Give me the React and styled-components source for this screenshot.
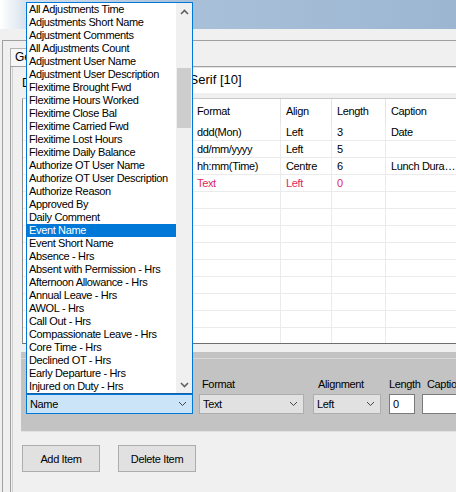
import React from 'react'
import styled, { createGlobalStyle } from 'styled-components'

const GlobalStyle = createGlobalStyle`
  html, body {
    margin: 0;
    padding: 0;
    background: #f0f0f0;
  }
  body {
    font-family: "Liberation Sans", Arial, sans-serif;
    font-size: 11px;
    letter-spacing: -0.35px;
    color: #000;
  }
  * {
    box-sizing: border-box;
  }
`

const Window = styled.div`
  position: relative;
  width: 456px;
  height: 492px;
  overflow: hidden;
  background: #f0f0f0;
  display: flex;
  flex-direction: column;
`

const TitleBar = styled.div`
  height: 29px;
  flex: none;
  background: linear-gradient(to right, #ffffff 0%, #d4e0ec 6%, #a9c0d9 40%, #9cb6d2 100%);
`

const MenuStrip = styled.div`
  height: 11px;
  flex: none;
  background: #f0f0f0;
`

const Frame = styled.div`
  flex: 1;
  margin-left: 2px;
  border-left: 1px solid #a0a0a0;
  border-top: 1px solid #a0a0a0;
  padding-left: 7px;
  display: flex;
  flex-direction: column;
  min-height: 0;
`

const TabStrip = styled.div`
  height: 25px;
  flex: none;
  display: flex;
  align-items: flex-end;
`

const Tab = styled.div`
  height: 18px;
  padding: 0 6px 0 4px;
  border: 1px solid #b4b4b4;
  border-bottom: none;
  background: #f7f7f7;
  font-size: 12px;
  letter-spacing: 0;
  line-height: 16px;
  white-space: nowrap;
`

const TabPage = styled.div`
  flex: 1;
  border-left: 1px solid #a0a0a0;
  border-top: 1px solid #a0a0a0;
  box-shadow: inset 1px 0 0 #f0f0f0, inset 2px 0 0 #d0d0d0;
  padding-left: 11px;
  display: flex;
  flex-direction: column;
  min-height: 0;
`

const FontRow = styled.div`
  height: 26px;
  flex: none;
  display: flex;
  align-items: stretch;
`

const FontLabel = styled.div`
  width: 74px;
  flex: none;
  padding-top: 9px;
  font-size: 12px;
  letter-spacing: 0;
  white-space: nowrap;
  overflow: hidden;
`

const FontBox = styled.div`
  flex: 1;
  background: #fff;
  border-top: 1px solid #e4e4e4;
  padding-left: 4px;
  font-size: 13px;
  letter-spacing: 0;
  line-height: 24px;
  white-space: nowrap;
`

const Grid = styled.div`
  margin-top: 5px;
  flex: none;
  border-top: 1px solid #c8c8c8;
  border-left: 1px solid #8c8c8c;
  border-bottom: 1px solid #6e6e6e;
  background: #fff;
  overflow: hidden;
`

const GridBody = styled.div`
  height: 219px;
  overflow: hidden;
`

const columns = '20px 149px 89px 51px 54px 72px'

const HeaderRow = styled.div`
  display: grid;
  grid-template-columns: ${columns};
  height: 25px;
`

const HeaderCell = styled.div`
  border-right: 1px solid #e3e3e3;
  padding-left: 5px;
  line-height: 25px;
  white-space: nowrap;
  overflow: hidden;
`

const Row = styled.div`
  display: grid;
  grid-template-columns: ${columns};
  height: 17px;
  color: ${p => (p.$editing ? '#e0285e' : '#000')};
`

const Cell = styled.div`
  border-right: 1px solid #ebebeb;
  border-bottom: 1px solid #ebebeb;
  padding: 0 1px 0 5px;
  line-height: 16px;
  white-space: nowrap;
  overflow: hidden;
  text-overflow: ellipsis;
`

const GridGap = styled.div`
  height: 8px;
  flex: none;
`

const EditPanel = styled.div`
  margin-left: -1px;
  height: 80px;
  flex: none;
  background: #c3c3c3;
  border-bottom: 1px solid #e2e2e2;
  padding: 25px 0 0 5px;
  display: flex;
  align-items: flex-start;
  position: relative;

  &::before {
    content: '';
    position: absolute;
    left: 0;
    right: 0;
    top: 6px;
    height: 1px;
    background: #d8d8d8;
  }
`

const Field = styled.div`
  display: flex;
  flex-direction: column;
  width: ${p => p.$width}px;
  margin-left: ${p => p.$gap || 0}px;
  flex: none;
`

const FieldLabel = styled.div`
  height: 14px;
  line-height: 14px;
  margin-bottom: 3px;
  padding-left: ${p => p.$indent || 0}px;
  white-space: nowrap;
`

const ComboWrap = styled.div`
  position: relative;
`

const Combo = styled.div`
  height: 20px;
  display: flex;
  align-items: center;
  justify-content: space-between;
  padding: 0 5px 0 3px;
  border: 1px solid ${p => (p.$open ? '#0078d7' : '#adadad')};
  background: ${p => (p.$open ? '#cce4f7' : '#e1e1e1')};
`

const TextInput = styled.div`
  height: 20px;
  border: 1px solid #7a7a7a;
  background: #fff;
  padding-left: 3px;
  line-height: 18px;
`

const DropList = styled.div`
  position: absolute;
  left: 0;
  right: 0;
  bottom: 100%;
  height: 392px;
  border: 1px solid #0078d7;
  border-bottom-color: #1b5fa6;
  background: #fff;
  display: flex;
  z-index: 10;
`

const Items = styled.div`
  flex: 1;
  display: flex;
  flex-direction: column;
`

const Item = styled.div`
  height: 13px;
  line-height: 13px;
  padding-left: 2px;
  white-space: nowrap;
  overflow: hidden;
  background: ${p => (p.$selected ? '#0078d7' : 'transparent')};
  color: ${p => (p.$selected ? '#fff' : '#000')};
`

const ScrollBar = styled.div`
  width: 16px;
  flex: none;
  background: #f0f0f0;
  display: flex;
  flex-direction: column;
`

const ScrollButton = styled.div`
  height: 17px;
  flex: none;
  display: flex;
  align-items: center;
  justify-content: center;
`

const Track = styled.div`
  flex: 1;
  padding: 0 1px;
`

const Thumb = styled.div`
  margin-top: ${p => p.$top}px;
  height: ${p => p.$size}px;
  background: #cdcdcd;
`

const ButtonRow = styled.div`
  display: flex;
  gap: 18px;
  margin-top: 13px;
`

const Button = styled.div`
  width: 78px;
  height: 27px;
  border: 1px solid #adadad;
  background: #e1e1e1;
  display: flex;
  align-items: center;
  justify-content: center;
`

const Chevron = ({ up, color = '#555', weight = 1 }) => (
  <svg width="9" height="6" viewBox="0 0 9 6">
    <path
      d={up ? 'M1 5 L4.5 1.5 L8 5' : 'M1 1 L4.5 4.5 L8 1'}
      fill="none"
      stroke={color}
      strokeWidth={weight}
    />
  </svg>
)

const fieldList = [
  'All Adjustments Time',
  'Adjustments Short Name',
  'Adjustment Comments',
  'All Adjustments Count',
  'Adjustment User Name',
  'Adjustment User Description',
  'Flexitime Brought Fwd',
  'Flexitime Hours Worked',
  'Flexitime Close Bal',
  'Flexitime Carried Fwd',
  'Flexitime Lost Hours',
  'Flexitime Daily Balance',
  'Authorize OT User Name',
  'Authorize OT User Description',
  'Authorize Reason',
  'Approved By',
  'Daily Comment',
  'Event Name',
  'Event Short Name',
  'Absence - Hrs',
  'Absent with Permission - Hrs',
  'Afternoon Allowance - Hrs',
  'Annual Leave - Hrs',
  'AWOL - Hrs',
  'Call Out - Hrs',
  'Compassionate Leave - Hrs',
  'Core Time - Hrs',
  'Declined OT - Hrs',
  'Early Departure - Hrs',
  'Injured on Duty - Hrs',
]

const rows = [
  { n: '1', field: 'Date', format: 'ddd(Mon)', align: 'Left', length: '3', caption: 'Date' },
  { n: '2', field: 'Date', format: 'dd/mm/yyyy', align: 'Left', length: '5', caption: '' },
  { n: '3', field: 'Lunch Duration', format: 'hh:mm(Time)', align: 'Centre', length: '6', caption: 'Lunch Duration' },
  { n: '4', field: 'Name', format: 'Text', align: 'Left', length: '0', caption: '', editing: true },
]

const emptyRows = Array.from({ length: 9 })

const App = () => (
  <Window>
    <GlobalStyle />
    <TitleBar />
    <MenuStrip />
    <Frame>
      <TabStrip>
        <Tab>General</Tab>
      </TabStrip>
      <TabPage>
        <FontRow>
          <FontLabel>Default Font</FontLabel>
          <FontBox>Microsoft Sans Serif [10]</FontBox>
        </FontRow>

        <Grid>
          <HeaderRow>
            <HeaderCell />
            <HeaderCell>Field</HeaderCell>
            <HeaderCell>Format</HeaderCell>
            <HeaderCell>Align</HeaderCell>
            <HeaderCell>Length</HeaderCell>
            <HeaderCell>Caption</HeaderCell>
          </HeaderRow>
          <GridBody>
            {rows.map(r => (
              <Row key={r.n} $editing={r.editing}>
                <Cell>{r.n}</Cell>
                <Cell>{r.field}</Cell>
                <Cell>{r.format}</Cell>
                <Cell>{r.align}</Cell>
                <Cell>{r.length}</Cell>
                <Cell>{r.caption}</Cell>
              </Row>
            ))}
            {emptyRows.map((_, i) => (
              <Row key={'e' + i}>
                <Cell />
                <Cell />
                <Cell />
                <Cell />
                <Cell />
                <Cell />
              </Row>
            ))}
          </GridBody>
        </Grid>

        <GridGap />

        <EditPanel>
          <Field $width={167}>
            <FieldLabel>Field</FieldLabel>
            <ComboWrap>
              <DropList>
                <Items>
                  {fieldList.map(f => (
                    <Item key={f} $selected={f === 'Event Name'}>
                      {f}
                    </Item>
                  ))}
                </Items>
                <ScrollBar>
                  <ScrollButton>
                    <Chevron up color="#606060" weight={1.6} />
                  </ScrollButton>
                  <Track>
                    <Thumb $top={48} $size={60} />
                  </Track>
                  <ScrollButton>
                    <Chevron color="#606060" weight={1.6} />
                  </ScrollButton>
                </ScrollBar>
              </DropList>
              <Combo $open>
                <span>Name</span>
                <Chevron color="#444" />
              </Combo>
            </ComboWrap>
          </Field>

          <Field $width={105} $gap={6}>
            <FieldLabel $indent={3}>Format</FieldLabel>
            <Combo>
              <span>Text</span>
              <Chevron color="#444" />
            </Combo>
          </Field>

          <Field $width={68} $gap={9}>
            <FieldLabel $indent={5}>Alignment</FieldLabel>
            <Combo>
              <span>Left</span>
              <Chevron color="#444" />
            </Combo>
          </Field>

          <Field $width={26} $gap={8}>
            <FieldLabel $indent={-2}>Length</FieldLabel>
            <TextInput>0</TextInput>
          </Field>

          <Field $width={80} $gap={7}>
            <FieldLabel $indent={5}>Caption</FieldLabel>
            <TextInput />
          </Field>
        </EditPanel>

        <ButtonRow>
          <Button>Add Item</Button>
          <Button>Delete Item</Button>
        </ButtonRow>
      </TabPage>
    </Frame>
  </Window>
)

export default App
